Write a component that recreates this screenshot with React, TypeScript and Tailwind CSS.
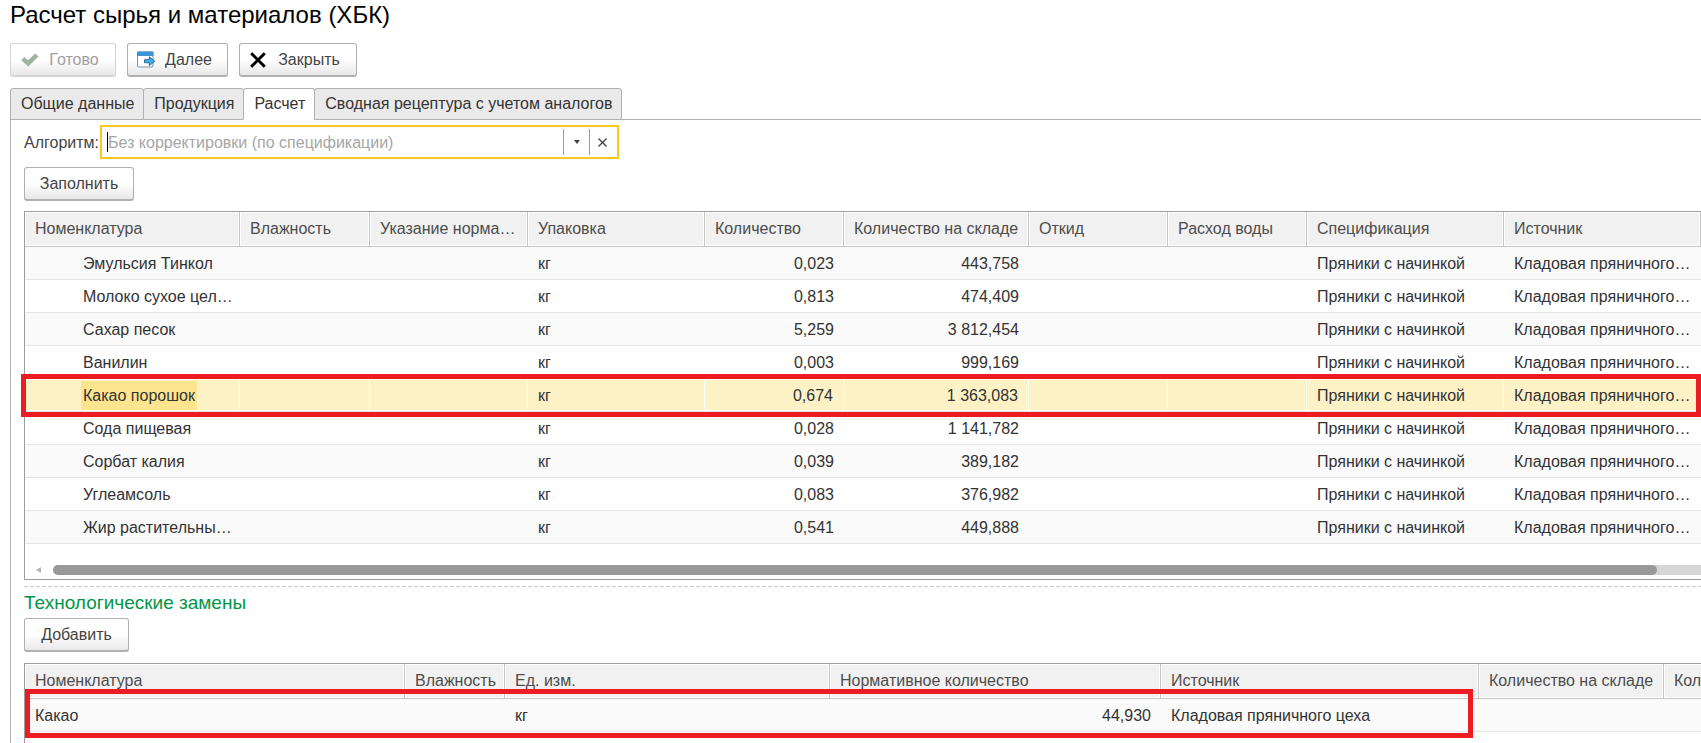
import { useState, type ReactNode } from 'react';

type Row = { name: string; qty: string; stock: string };

const rows: Row[] = [
  { name: 'Эмульсия Тинкол', qty: '0,023', stock: '443,758' },
  { name: 'Молоко сухое цел…', qty: '0,813', stock: '474,409' },
  { name: 'Сахар песок', qty: '5,259', stock: '3 812,454' },
  { name: 'Ванилин', qty: '0,003', stock: '999,169' },
  { name: 'Какао порошок', qty: '0,674', stock: '1 363,083' },
  { name: 'Сода пищевая', qty: '0,028', stock: '1 141,782' },
  { name: 'Сорбат калия', qty: '0,039', stock: '389,182' },
  { name: 'Углеамсоль', qty: '0,083', stock: '376,982' },
  { name: 'Жир растительны…', qty: '0,541', stock: '449,888' },
];

const mainColumns = [
  { title: 'Номенклатура', width: 'w-[215px]' },
  { title: 'Влажность', width: 'w-[130px]' },
  { title: 'Указание норма…', width: 'w-[158px]' },
  { title: 'Упаковка', width: 'w-[177px]' },
  { title: 'Количество', width: 'w-[139px]' },
  { title: 'Количество на складе', width: 'w-[185px]' },
  { title: 'Откид', width: 'w-[139px]' },
  { title: 'Расход воды', width: 'w-[139px]' },
  { title: 'Спецификация', width: 'w-[197px]' },
  { title: 'Источник', width: 'w-[197px]' },
];

const swapColumns = [
  { title: 'Номенклатура', width: 'w-[380px]' },
  { title: 'Влажность', width: 'w-[100px]' },
  { title: 'Ед. изм.', width: 'w-[325px]' },
  { title: 'Нормативное количество', width: 'w-[331px]' },
  { title: 'Источник', width: 'w-[318px]' },
  { title: 'Количество на складе', width: 'w-[185px]' },
  { title: 'Количество', width: 'w-[139px]' },
];

const tabs = ['Общие данные', 'Продукция', 'Расчет', 'Сводная рецептура с учетом аналогов'];

function PushButton({ children, width, disabled = false }: { children: ReactNode; width: string; disabled?: boolean }) {
  return (
    <button
      type="button"
      disabled={disabled}
      className={`${width} flex h-[34px] items-center justify-center rounded-[3px] border border-b-2 border-[#b0b0b0] bg-linear-to-b from-white from-50% to-[#e8e8e8] whitespace-nowrap text-[#444] disabled:border-[#d4d4d4] disabled:text-[#a0a0a0]`}
    >
      {children}
    </button>
  );
}

function HeadRow({ columns }: { columns: { title: string; width: string }[] }) {
  return (
    <thead>
      <tr className="h-[35px]">
        {columns.map((c) => (
          <th
            key={c.title}
            scope="col"
            className={`${c.width} border-r border-b border-[#c6c6c6] bg-[#f1f1f1] pr-1 pl-2.5 text-left font-normal whitespace-nowrap text-[#4d4d4d] shadow-[inset_0_0_0_1px_#fff]`}
          >
            {c.title}
          </th>
        ))}
      </tr>
    </thead>
  );
}

export default function App() {
  const [tab, setTab] = useState('Расчет');
  const [algorithm, setAlgorithm] = useState('');
  const selected = 'Какао порошок';

  return (
    <main className="flex h-screen min-h-[600px] flex-col overflow-hidden bg-white pl-2.5 font-['Liberation_Sans',Arial,sans-serif] text-base leading-5 text-[#333]">
      <h1 className="h-[43px] pt-px text-2xl leading-7 text-black">Расчет сырья и материалов (ХБК)</h1>

      <div className="flex gap-[11px]">
        <PushButton width="w-[106px]" disabled>
          <svg className="-ml-1.5 mr-2.5 h-[14px] w-[18px]" viewBox="0 0 18 14" fill="#9fb3a2" aria-hidden="true">
            <path d="M0.3 7.2 L3.4 4 L7 7.3 L14.2 0.5 L17.5 3.4 L7.2 13.5 Z" />
          </svg>
          Готово
        </PushButton>
        <PushButton width="w-[101px]">
          <svg className="-ml-1.5 mr-2.5 h-[17px] w-[18px]" viewBox="0 0 18 17" aria-hidden="true">
            <rect x="0.5" y="1" width="15.5" height="15" rx="1" fill="#fff" stroke="#7390a6" />
            <path d="M0 1.5 Q0 0.5 1 0.5 H15.5 Q16.5 0.5 16.5 1.5 V5 H0 Z" fill="#3f94d8" />
            <path d="M7.5 8.7 H12.3 V5.8 L17.8 10.2 L12.3 14.6 V11.7 H7.5 Z" fill="#43b0ec" stroke="#1f5d8c" strokeWidth="0.9" />
          </svg>
          Далее
        </PushButton>
        <PushButton width="w-[118px]">
          <svg className="-ml-1.5 mr-3 h-4 w-4" viewBox="0 0 16 16" fill="none" stroke="#000" strokeWidth="3" aria-hidden="true">
            <path d="M1.2 1.2 L14.8 14.8 M14.8 1.2 L1.2 14.8" />
          </svg>
          Закрыть
        </PushButton>
      </div>

      <div role="tablist" className="mt-[11px] flex border-b border-[#b0b0b0]">
        {tabs.map((t) => (
          <button
            key={t}
            type="button"
            role="tab"
            aria-selected={t === tab}
            onClick={() => setTab(t)}
            className="-mr-px -mb-px h-8 rounded-t-[3px] border border-[#b0b0b0] bg-[#eaeaea] pr-[9px] pl-2.5 aria-selected:border-b-white aria-selected:bg-white"
          >
            {t}
          </button>
        ))}
      </div>

      <section className="flex min-h-0 flex-1 flex-col overflow-hidden border-l border-[#b0b0b0] pl-[13px]">
        <div className="mt-[5px] flex items-center gap-px">
          <label htmlFor="algorithm" className="pt-0.5 text-[#444]">Алгоритм:</label>
          <div className="flex h-[34px] w-[519px] items-center border-2 border-[#fac81e]">
            <input
              id="algorithm"
              value={algorithm}
              onChange={(e) => setAlgorithm(e.target.value)}
              placeholder="Без корректировки (по спецификации)"
              className="ml-[5px] h-5 min-w-0 flex-1 border-l border-black pt-0.5 outline-none placeholder:text-[#a6a6a6]"
            />
            <button type="button" aria-label="Выбрать из списка" className="flex h-[26px] w-[26px] items-center justify-center border-l border-[#9a9a9a]">
              <svg className="h-1 w-1.5" viewBox="0 0 6 4" fill="#404040" aria-hidden="true">
                <path d="M0 0 H6 L3 4 Z" />
              </svg>
            </button>
            <button type="button" aria-label="Очистить" onClick={() => setAlgorithm('')} className="flex h-[26px] w-7 items-center border-l border-[#9a9a9a] pl-2">
              <svg className="h-[9px] w-[9px]" viewBox="0 0 9 9" fill="none" stroke="#404040" strokeWidth="1.3" aria-hidden="true">
                <path d="M0.5 0.5 L8.5 8.5 M8.5 0.5 L0.5 8.5" />
              </svg>
            </button>
          </div>
        </div>

        <div className="mt-2 flex">
          <PushButton width="w-[110px]">Заполнить</PushButton>
        </div>

        <div className="relative mt-2.5 shrink-0 border border-r-0 border-[#9d9d9d]">
          <table className="w-full min-w-[1676px] table-fixed border-separate border-spacing-0">
            <HeadRow columns={mainColumns} />
            <tbody>
              {rows.map((r) => {
                const active = r.name === selected;
                const cell = active
                  ? 'whitespace-nowrap border-b border-r border-b-[#e5e5e5] border-r-white bg-[#fdf1c6] pt-0.5 pl-2.5 shadow-[inset_0_1px_0_#fff,inset_0_-1px_0_#fff]'
                  : 'whitespace-nowrap border-b border-[#e5e5e5] pt-0.5 pl-2.5';
                return (
                  <tr key={r.name} className="h-[33px] odd:bg-[#fafafa]">
                    <td className={`${cell} pl-14`}>
                      {active ? <span className="bg-[#fde58f] px-0.5 py-1.5">{r.name}</span> : <span className="pl-0.5">{r.name}</span>}
                    </td>
                    <td className={cell} />
                    <td className={cell} />
                    <td className={cell}>кг</td>
                    <td className={`${cell} pr-2.5 text-right`}>{r.qty}</td>
                    <td className={`${cell} pr-2.5 text-right`}>{r.stock}</td>
                    <td className={cell} />
                    <td className={cell} />
                    <td className={cell}>Пряники с начинкой</td>
                    <td className={cell}>Кладовая пряничного…</td>
                  </tr>
                );
              })}
            </tbody>
          </table>
          <div className="pointer-events-none absolute top-[162px] right-0 -left-1 h-[43px] border-5 border-[#ed1c24]" />
          <div className="flex h-[35px] items-center pt-4 pl-[11px]">
            <svg className="mr-3 h-1.5 w-[5px]" viewBox="0 0 5 6" fill="#b4b4b4" aria-hidden="true">
              <path d="M5 0 V6 L0 3 Z" />
            </svg>
            <div className="h-2.5 flex-1 rounded-l-full bg-[#d6d6d6]">
              <div className="h-full w-[97.3%] rounded-full bg-[#999]" />
            </div>
          </div>
        </div>

        <div className="mt-1.5 h-px shrink-0 bg-[repeating-linear-gradient(90deg,#ccc_0_4px,transparent_4px_6px)]" />

        <h2 className="mt-0.5 mb-px text-[19px] leading-7 text-[#009646]">Технологические замены</h2>
        <div className="flex">
          <PushButton width="w-[105px]">Добавить</PushButton>
        </div>

        <div className="relative mt-[11px] flex-1 border-t border-l border-[#9d9d9d]">
          <table className="w-[1778px] table-fixed border-separate border-spacing-0">
            <HeadRow columns={swapColumns} />
            <tbody>
              <tr className="h-[33px] bg-[#fafafa] *:border-b *:border-[#e5e5e5] *:px-2.5 *:pt-0.5">
                <td>Какао</td>
                <td />
                <td>кг</td>
                <td className="text-right">44,930</td>
                <td>Кладовая пряничного цеха</td>
                <td />
                <td />
              </tr>
            </tbody>
          </table>
          <div className="pointer-events-none absolute top-[25px] left-0 h-[49px] w-[1448px] border-5 border-[#ed1c24]" />
        </div>
      </section>
    </main>
  );
}
